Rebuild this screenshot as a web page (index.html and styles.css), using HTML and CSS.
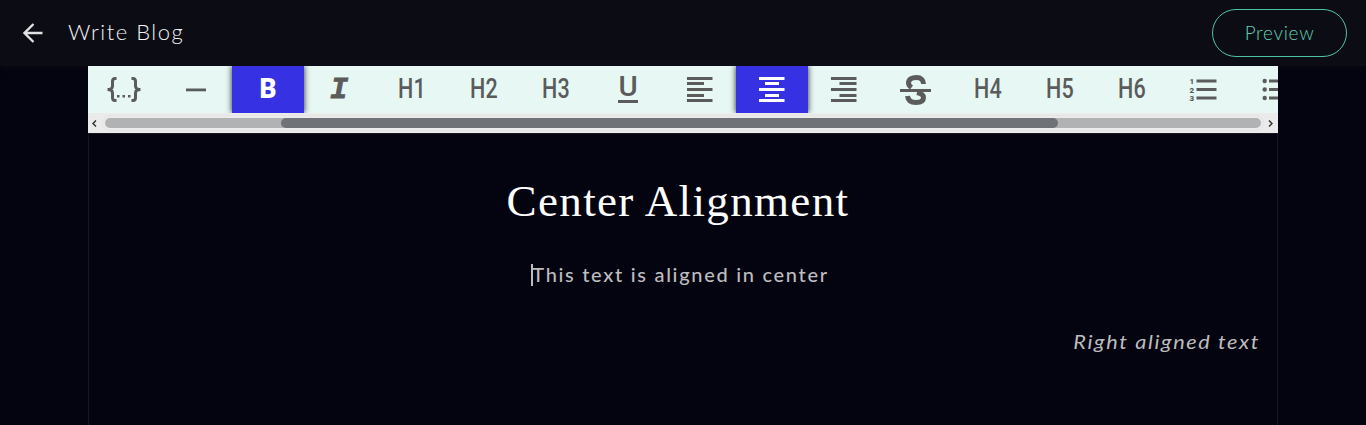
FILE: index.html
```html
<!DOCTYPE html>
<html lang="en">
<head>
<meta charset="utf-8">
<title>Write Blog</title>
<link rel="stylesheet" href="styles.css">
</head>
<body>
<header class="header">
  <svg class="back" viewBox="0 0 20 20"><path d="M19.500 10H2M10.500 1 1.500 10l9 9"/></svg>
  <h1 class="title"><span>Write Blog</span></h1>
  <button class="preview"><span>Preview</span></button>
</header>
<main class="editor">
  <nav class="toolbar">
    <div class="tools">
      <button class="tool"><svg class="icon" viewBox="0 0 36 30"><path class="brace" d="M10.500 3.500H9Q6.500 3.500 6.500 6.500v4.500Q6.500 14.500 1.500 14.500Q6.500 14.500 6.500 18v4.500Q6.500 25.500 9 25.500h1.500M25.500 3.500H27Q29.500 3.500 29.500 6.500v4.500Q29.500 14.500 34.500 14.500Q29.500 14.500 29.500 18v4.500Q29.500 25.500 27 25.500h-1.500"/><path class="fill" d="M11 20h2.500v2.500H11zM16.500 20H19v2.500h-2.500zM22 20h2.500v2.500H22z"/></svg></button>
      <button class="tool"><svg class="icon" viewBox="0 0 36 30"><path class="fill" d="M8 13.500h20v2.800H8z"/></svg></button>
      <button class="tool active"><span class="letter bold">B</span></button>
      <button class="tool"><span class="letter italic">I</span></button>
      <button class="tool"><span class="letter">H1</span></button>
      <button class="tool"><span class="letter">H2</span></button>
      <button class="tool"><span class="letter">H3</span></button>
      <button class="tool"><span class="underlined"><span class="letter wide">U</span></span></button>
      <button class="tool"><svg class="icon" viewBox="0 0 36 30"><path class="fill" d="M5 2h25.500v3H5zM5 7h17v3H5zM5 13h25.500v3H5zM5 19h17v3H5zM5 24h25.500v3H5z"/></svg></button>
      <button class="tool active"><svg class="icon" viewBox="0 0 36 30"><path class="fill" d="M5 2h25.500v3H5zM11 7h14v3H11zM5 13h25.500v3H5zM11 19h14v3H11zM5 24h25.500v3H5z"/></svg></button>
      <button class="tool"><svg class="icon" viewBox="0 0 36 30"><path class="fill" d="M5 2h25.500v3H5zM13.500 7h17v3h-17zM5 13h25.500v3H5zM13.500 19h17v3h-17zM5 24h25.500v3H5z"/></svg></button>
      <button class="tool"><svg class="icon" viewBox="0 0 36 30"><path class="strike" d="M25.500 9C25.500 5 23 2.500 18.500 2.500c-5 0-8 2-8 5.500 0 2 1 3 3 4.500M19 17.500c4.500 1 6.500 2.500 6.500 5 0 3.500-3 5-7.500 5-5 0-8-2-8.500-6.500"/><path class="fill" d="M2 14h31v3H2z"/></svg></button>
      <button class="tool"><span class="letter">H4</span></button>
      <button class="tool"><span class="letter">H5</span></button>
      <button class="tool"><span class="letter">H6</span></button>
      <button class="tool"><svg class="icon" viewBox="0 0 36 30"><path class="fill" d="M10.500 4.500h20v3h-20zM10.500 13h20v3h-20zM10.500 21.500h20v3h-20z"/><g class="digits"><text x="3.500" y="8.500">1</text><text x="3.500" y="17.500">2</text><text x="3.500" y="26">3</text></g></svg></button>
      <button class="tool"><svg class="icon" viewBox="0 0 36 30"><path class="fill" d="M11 4.500h20v3H11zM11 13h20v3H11zM11 21.500h20v3H11z"/><circle class="fill" cx="6.700" cy="6" r="2.200"/><circle class="fill" cx="6.700" cy="14.500" r="2.200"/><circle class="fill" cx="6.700" cy="23" r="2.200"/></svg></button>
    </div>
    <div class="scrollbar">
      <svg class="arrow" viewBox="0 0 5 7"><path d="M4 .5 1 3.500l3 3"/></svg>
      <div class="track"><div class="thumb"></div></div>
      <svg class="arrow" viewBox="0 0 5 7"><path d="m1 .5 3 3-3 3"/></svg>
    </div>
  </nav>
  <article class="page">
    <h2 class="heading"><span>Center Alignment</span></h2>
    <p class="centered"><i class="caret"></i><span>This text is aligned in center</span></p>
    <p class="right"><span>Right aligned text</span></p>
  </article>
</main>
</body>
</html>
```
FILE: styles.css
```css
* { box-sizing: border-box; }
body {
  margin: 0;
  height: 425px;
  overflow: hidden;
  background: #040310;
  font-family: Lato, sans-serif;
}
button { font: inherit; color: inherit; background: none; border: 0; padding: 0; }
.header {
  height: 66px;
  display: flex;
  align-items: center;
  padding: 0 19px 0 23px;
  background: #0c0c15;
  box-shadow: 0 1px 8px #0c0c15;
}
.back { width: 20px; height: 20px; fill: none; stroke: #dfe3e3; stroke-width: 2.300; }
.title {
  margin: 0 auto 4px 25px;
  font-size: 22px;
  font-weight: 300;
  letter-spacing: 1.500px;
  color: #f1f1f3;
}
.preview {
  width: 135px;
  height: 48px;
  border: 1px solid #4dc4a5;
  border-radius: 24px;
  color: #58d3b4;
  font-size: 19px;
  font-weight: 300;
  letter-spacing: .7px;
  padding-bottom: 2px;
}
.editor { width: 1190px; margin: 0 auto; }
.toolbar { background: #ebebeb; overflow: hidden; }
.tools { display: flex; height: 47px; overflow: hidden; background: #e7f8f4; }
.tool {
  flex: 0 0 72px;
  display: flex;
  align-items: center;
  justify-content: center;
  color: #5b5b5b;
}
.active { background: #3632e3; color: #fff; box-shadow: 0 0 6px #222; }
.icon { width: 36px; height: 30px; }
.fill, .digits { fill: currentColor; }
.brace { fill: none; stroke: currentColor; stroke-width: 3; }
.strike { fill: none; stroke: currentColor; stroke-width: 5; }
.digits { font: 900 8px Roboto, sans-serif; }
.letter {
  font: 500 28px/30px Roboto, sans-serif;
  transform: scaleX(.77);
  padding-bottom: 2px;
}
.bold { font-weight: 900; transform: scaleX(.94); }
.italic {
  font: italic bold 30px/30px "Liberation Mono", monospace;
  transform: none;
  padding: 0 2px 0 0;
  -webkit-text-stroke: .8px currentColor;
}
.underlined {
  width: 20px;
  height: 27px;
  display: flex;
  justify-content: center;
  border-bottom: 3px solid;
}
.wide { line-height: 22px; padding: 0; transform: scaleX(1.05); }
.scrollbar { display: flex; align-items: center; justify-content: space-between; height: 20px; padding: 0 5px 0 4px; }
.arrow { width: 5px; height: 7px; fill: none; stroke: #333; stroke-width: 1.500; }
.track { width: 1156px; height: 10px; border-radius: 5px; background: #b1b2b4; outline: 1px solid #e4e4e4; outline-offset: 2px; }
.thumb { width: 777px; height: 10px; margin-left: 176px; border-radius: 5px; background: #6f7276; }
.page { height: 300px; padding: 41px 18px 0; border: 1px solid #181722; }
.page p { margin: 0; font-size: 20px; line-height: 24px; color: #bdbdbf; }
.heading {
  margin: 0;
  font: 400 45px/52px "Liberation Serif", serif;
  letter-spacing: 1.350px;
  text-align: center;
  color: #fff;
  padding-right: 10px;
}
.page .centered { display: flex; justify-content: center; margin-top: 35px; padding-right: 6px; letter-spacing: 1.700px; font-weight: 500; }
.caret { width: 2px; height: 22px; margin: 2px -1px 0 0; background: #bdbdbf; }
.page .right { margin: 43px -1px 0 0; text-align: right; font-style: italic; letter-spacing: 1.500px; }
.right span { display: inline-block; transform: scaleX(1.085); transform-origin: right; }
```
